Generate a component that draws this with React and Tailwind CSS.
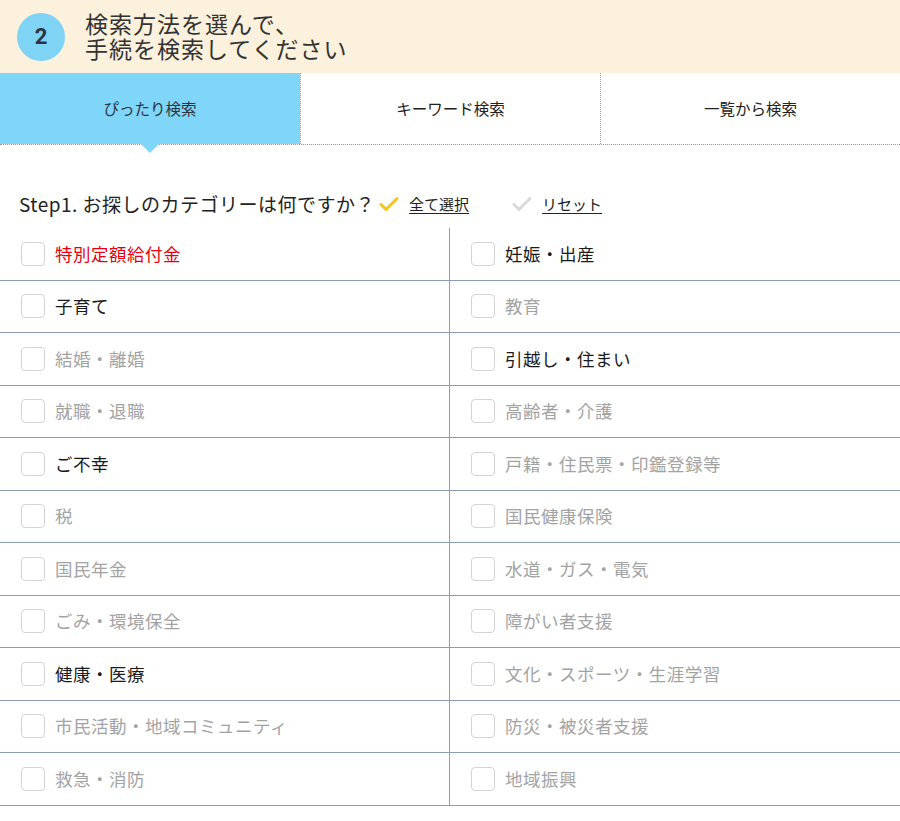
const LEFT = [
  { label: "特別定額給付金", tone: "red" },
  { label: "子育て", tone: "on" },
  { label: "結婚・離婚", tone: "off" },
  { label: "就職・退職", tone: "off" },
  { label: "ご不幸", tone: "on" },
  { label: "税", tone: "off" },
  { label: "国民年金", tone: "off" },
  { label: "ごみ・環境保全", tone: "off" },
  { label: "健康・医療", tone: "on" },
  { label: "市民活動・地域コミュニティ", tone: "off" },
  { label: "救急・消防", tone: "off" },
];

const RIGHT = [
  { label: "妊娠・出産", tone: "on" },
  { label: "教育", tone: "off" },
  { label: "引越し・住まい", tone: "on" },
  { label: "高齢者・介護", tone: "off" },
  { label: "戸籍・住民票・印鑑登録等", tone: "off" },
  { label: "国民健康保険", tone: "off" },
  { label: "水道・ガス・電気", tone: "off" },
  { label: "障がい者支援", tone: "off" },
  { label: "文化・スポーツ・生涯学習", tone: "off" },
  { label: "防災・被災者支援", tone: "off" },
  { label: "地域振興", tone: "off" },
];

const toneClass = {
  red: "text-[#e60012]",
  on: "text-[#1a1a1a]",
  off: "text-[#a3a3a3]",
};

function Check({ color }) {
  return (
    <svg width="20" height="16" viewBox="0 0 20 16" fill="none">
      <path d="M2 8.5l5 5L18 2.5" stroke={color} strokeWidth="3" strokeLinecap="round" strokeLinejoin="round" />
    </svg>
  );
}

function Row({ item, right }) {
  return (
    <div
      className={
        "h-[52.5px] border-b-[1.5px] border-[#8c9db3] flex items-center pl-[21px] " +
        (right ? "" : "border-r-[1.5px]")
      }
    >
      <span className="w-[24px] h-[24px] rounded-[4px] border border-[#d4d4d4] bg-white shrink-0" />
      <span className={"ml-[10px] text-[17.5px] tracking-[0.5px] " + toneClass[item.tone]}>{item.label}</span>
    </div>
  );
}

export default function App() {
  return (
    <div className="w-[900px] bg-white font-['Noto_Sans_CJK_JP','Noto_Sans',sans-serif]">
      <div className="h-[73px] bg-[#fbf1dc] flex items-center pl-[17px]">
        <div className="w-[48px] h-[48px] rounded-full bg-[#7fd3f5] flex items-center justify-center text-[22px] font-bold text-[#2b3440] font-['Roboto',sans-serif]">
          2
        </div>
        <div className="ml-[20px] text-[23px] leading-[25px] text-[#333] tracking-[1px] -mt-[1px]">
          <div>検索方法を選んで、</div>
          <div>手続を検索してください</div>
        </div>
      </div>

      <div className="grid grid-cols-3 h-[72px] border-b border-dotted border-[#999]">
        <div className="relative bg-[#7fd6f8] flex items-center justify-center text-[15.5px] text-[#2a3440]">
          ぴったり検索
          <span className="absolute left-[141px] top-full w-0 h-0 border-l-[9px] border-r-[9px] border-t-[9px] border-l-transparent border-r-transparent border-t-[#7fd6f8]" />
        </div>
        <div className="border-l border-dotted border-[#999] flex items-center justify-center text-[15.5px] text-[#222]">
          キーワード検索
        </div>
        <div className="border-l border-dotted border-[#999] flex items-center justify-center text-[15.5px] text-[#222]">
          一覧から検索
        </div>
      </div>

      <div className="flex items-center pl-[19px] pt-[45px] pb-[10px] h-[83px]">
        <span className="text-[19px] text-[#222] tracking-[0.5px]">Step1. お探しのカテゴリーは何ですか？</span>
        <span className="ml-[4px]">
          <Check color="#f5c518" />
        </span>
        <span className="ml-[10px] text-[15px] text-[#222] underline underline-offset-[3px]">全て選択</span>
        <span className="ml-[43px]">
          <Check color="#dadada" />
        </span>
        <span className="ml-[10px] text-[15px] text-[#222] underline underline-offset-[3px]">リセット</span>
      </div>

      <div className="grid grid-cols-2">
        {LEFT.map((l, i) => (
          <div key={i} className="contents">
            <Row item={l} />
            <Row item={RIGHT[i]} right />
          </div>
        ))}
      </div>
    </div>
  );
}
